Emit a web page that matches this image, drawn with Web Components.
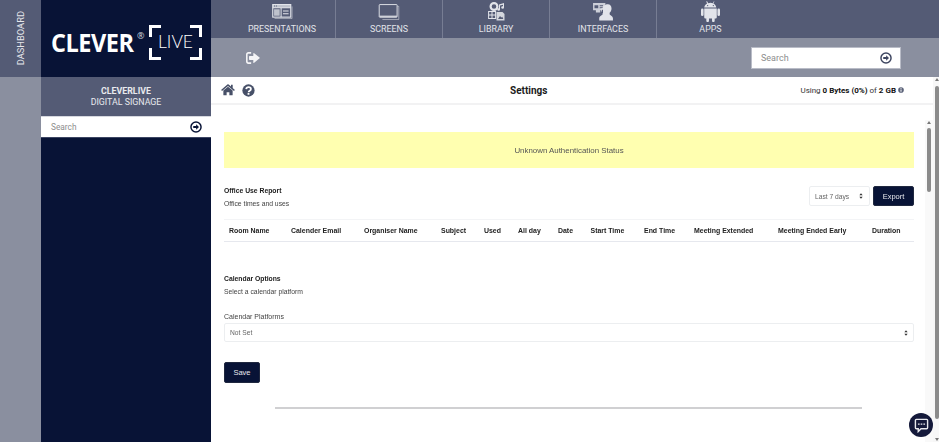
<!DOCTYPE html>
<html lang="en">
<head>
<meta charset="utf-8">
<title>CleverLive Settings</title>
<style>
html, body { margin: 0; height: 100%; overflow: hidden; background: #fff; }
body { font-family: "Liberation Sans", Arial, sans-serif; }
</style>
</head>
<body>
<cl-shell>
    <cl-rail slot="rail">DASHBOARD</cl-rail>
    <cl-logo slot="logo"></cl-logo>
    <cl-sidebar slot="sidebar" title-line="CLEVERLIVE" sub-line="DIGITAL SIGNAGE"></cl-sidebar>
    <cl-nav-item slot="nav" icon="presentations">PRESENTATIONS</cl-nav-item>
    <cl-nav-item slot="nav" icon="screens">SCREENS</cl-nav-item>
    <cl-nav-item slot="nav" icon="library">LIBRARY</cl-nav-item>
    <cl-nav-item slot="nav" icon="interfaces">INTERFACES</cl-nav-item>
    <cl-nav-item slot="nav" icon="apps" last>APPS</cl-nav-item>
    <cl-subbar slot="subbar"></cl-subbar>
    <cl-settings slot="main"></cl-settings>
</cl-shell>
<cl-scrollbar class="outer"></cl-scrollbar>
<cl-chat></cl-chat>

<script>
const ICONS = {
    home: `<svg viewBox="0 0 16 14" width="100%" height="100%"><path fill="currentColor" d="M8 3.2 2.6 7.7v5c0 .3.2.5.5.5h3.3V9.6h3.2v3.6h3.3c.3 0 .5-.2.5-.5v-5zM15.8 6.6l-2.3-1.9V1h-2v2L8.7.5C8.3.2 7.7.2 7.3.5L.2 6.6c-.2.1-.2.4 0 .6l.6.7c.2.2.4.2.6 0L8 2.4l6.6 5.5c.2.2.4.2.6 0l.6-.7c.2-.2.2-.5 0-.6z"/></svg>`,
    question: `<svg viewBox="0 0 14 14" width="100%" height="100%"><circle cx="7" cy="7" r="6.6" fill="currentColor"/><path fill="none" stroke="#fff" stroke-width="1.9" d="M4.5 5.4C4.7 4 5.8 3.3 7.1 3.3c1.4 0 2.5.8 2.5 2 0 1-.6 1.5-1.3 1.9-.8.5-1.2.8-1.2 1.7"/><rect x="6" y="9.7" width="2" height="1.9" fill="#fff"/></svg>`,
    info: `<svg viewBox="0 0 14 14" width="100%" height="100%"><circle cx="7" cy="7" r="6.6" fill="currentColor"/><rect x="5.8" y="2.8" width="2.4" height="2.2" fill="#fff"/><rect x="5.8" y="6" width="2.4" height="5" fill="#fff"/></svg>`,
    signout: `<svg viewBox="0 0 14 12" width="100%" height="100%"><path fill="currentColor" d="M4.8 0H2.4C1 0 0 1 0 2.4v7.2C0 11 1 12 2.4 12h2.4c.3 0 .4-.2.4-.4v-.9c0-.3-.1-.4-.4-.4H2.6c-.6 0-1-.5-1-1V2.7c0-.6.4-1 1-1h2.2c.3 0 .4-.2.4-.4V.4c0-.2-.1-.4-.4-.4z"/><path fill="currentColor" d="M8.2 1.2c-.3-.3-.9-.1-.9.4v2.5H3.6c-.4 0-.6.3-.6.6v2.6c0 .3.2.6.6.6h3.7v2.5c0 .5.6.7.9.4L13.6 6.3c.2-.2.2-.5 0-.7z"/></svg>`,
    go: `<svg viewBox="0 0 14 14" width="100%" height="100%"><circle cx="7" cy="7" r="5.9" fill="none" stroke="currentColor" stroke-width="1.7"/><path fill="currentColor" d="M7.2 3.7 10.5 7l-3.3 3.3V8.2H3.8V5.8h3.4z"/></svg>`,
    presentations: `<svg viewBox="0 0 22 16" width="100%" height="100%"><g fill="none" stroke="currentColor"><path stroke-opacity=".55" d="M2.5 15.4h18.7V2.6"/><rect x=".6" y=".6" width="19.2" height="13.4" stroke-width="1.2"/><path d="M.6 4h19.2M9.5 4v10M11.5 7.5h6M11.5 10.5h6" stroke-width="1.1"/></g><path fill="currentColor" d="M.6.6h19.2V4H.6zM2 5.5h6v7H2z" opacity=".75"/><path fill="#545b75" d="M2 1.7h1v1H2zM4 1.7h1v1H4z"/></svg>`,
    screens: `<svg viewBox="0 0 22 17" width="100%" height="100%"><g fill="none" stroke="currentColor"><path stroke-opacity=".55" d="M20 2.500h1.400v14H4"/><rect x=".6" y=".6" width="19" height="13.400" rx=".6" stroke-width="1"/></g><path fill="currentColor" d="M1 12.300h18.400V14H1z" opacity=".8"/></svg>`,
    library: `<svg viewBox="0 0 17 19" width="100%" height="100%"><circle cx="6" cy="4.500" r="3.400" fill="none" stroke="currentColor" stroke-width="2.200"/><path fill="currentColor" d="M11 2.500 16 1v4.400a1.400 1.200 0 1 1-1-1.100V2.700l-3 .9v3.800a1.400 1.200 0 1 1-1-1.100z"/><g fill="none" stroke="currentColor"><rect x=".6" y="9.500" width="7" height="7" /><path d="M4 9.500v7M.6 13h7"/></g><path fill="currentColor" d="M8.500 10h6l2 2v6.500h-8z" opacity=".9"/><path fill="#545b75" d="m10 17 2-3 1.400 1.600.9-.9 1 2.300z"/></svg>`,
    interfaces: `<svg viewBox="0 0 21 19" width="100%" height="100%"><path fill="currentColor" d="M0 0h13v2.600a4.600 4.600 0 0 0-1.200 3c0 .7.1 1.300.4 2H7.600V10H3V7.600H0z" opacity=".85"/><path fill="#545b75" d="M1.500 2.500h4v3h-4zM7 2.500h3.500v1H7zM7 4.500h3.500v1H7z"/><path fill="currentColor" d="M15.600 1.400c2.500 0 3.900 1.900 3.900 4.300 0 2-.8 3.700-2 4.700v1.500c0 1 3.500 1.800 3.500 4.200V18.500H6.500v-2.400c0-2.400 3.600-3.200 3.600-4.200v-1.500c-1.200-1-2-2.700-2-4.700H10c.2-2.500 3-4.300 5.600-4.300z"/><path fill="#545b75" d="M9.200 7h1.300v3.600H9.200z"/></svg>`,
    apps: `<svg viewBox="0 0 20 22" width="100%" height="100%"><path fill="currentColor" d="M6.400.2l1.200 2a6.800 6.800 0 0 1 4.800 0l1.200-2 .5.300-1.100 2c1.800 1 3 2.600 3.100 4.400H3.400c.1-1.800 1.300-3.400 3.100-4.400l-1.100-2z"/><path fill="currentColor" d="M3.400 7.800h13.200v9.300c0 .8-.6 1.400-1.400 1.400h-.8v2.300a1.400 1.400 0 0 1-2.800 0v-2.300H8.400v2.300a1.400 1.400 0 0 1-2.800 0v-2.300h-.8c-.8 0-1.400-.6-1.400-1.400z"/><rect x="0" y="7.800" width="2.700" height="8" rx="1.350" fill="currentColor"/><rect x="17.300" y="7.800" width="2.700" height="8" rx="1.350" fill="currentColor"/><circle cx="7" cy="4.800" r=".7" fill="#545b75"/><circle cx="13" cy="4.800" r=".7" fill="#545b75"/></svg>`,
    sort: `<svg viewBox="0 0 6 9" width="100%" height="100%"><path fill="currentColor" d="M3 .5 5.500 3.500H.5zM3 8.500.5 5.500h5z"/></svg>`,
    chat: `<svg viewBox="0 0 16 16" width="100%" height="100%"><path fill="none" stroke="currentColor" stroke-width="1.500" d="M2.500 1.500h11c.6 0 1 .4 1 1v8c0 .6-.4 1-1 1H7.500L4.500 14.500v-3h-2c-.6 0-1-.4-1-1v-8c0-.6.4-1 1-1z"/><path fill="currentColor" d="M4.200 5.800h1.800v1.400H4.200zM7.100 5.800h1.800v1.400H7.100zM10 5.800h1.800v1.400H10z"/></svg>`,
};

class ClIcon extends HTMLElement {
    connectedCallback() {
        const w = this.getAttribute("w") || 14;
        const h = this.getAttribute("h") || w;
        this.attachShadow({mode: "open"}).innerHTML = `
<style>
:host { display: inline-block; flex: none; width: ${w}px; height: ${h}px; line-height: 0; }
</style>
${ICONS[this.getAttribute("name")] || ""}`;
    }
}
customElements.define("cl-icon", ClIcon);

customElements.define("cl-shell", class extends HTMLElement {
    constructor() {
        super();
        this.attachShadow({mode: "open"}).innerHTML = `
<style>
:host {
    display: grid;
    grid-template-columns: 41px 170px 1fr;
    grid-template-rows: 77px 1fr;
    width: 939px;
    height: 442px;
    overflow: hidden;
}
.left { grid-row: 1 / 3; display: flex; flex-direction: column; background: #8a8f9f; }
.brand { background: #081336; }
.side { background: #081336; }
.top { display: flex; flex-direction: column; }
.nav { display: flex; height: 38px; padding-left: 18px; background: #545b75; }
.main { min-width: 0; }
</style>
<div class="left"><slot name="rail"></slot></div>
<div class="brand"><slot name="logo"></slot></div>
<div class="top">
    <div class="nav"><slot name="nav"></slot></div>
    <slot name="subbar"></slot>
</div>
<div class="side"><slot name="sidebar"></slot></div>
<div class="main"><slot name="main"></slot></div>`;
    }
});

customElements.define("cl-rail", class extends HTMLElement {
    constructor() {
        super();
        this.attachShadow({mode: "open"}).innerHTML = `
<style>
:host {
    display: flex;
    align-items: center;
    justify-content: center;
    height: 77px;
    background: #545b75;
    color: #e6e7ec;
    font: 400 9.300px Roboto, sans-serif;
}
span { writing-mode: vertical-rl; transform: rotate(180deg); }
</style>
<span><slot></slot></span>`;
    }
});

customElements.define("cl-logo", class extends HTMLElement {
    constructor() {
        super();
        this.attachShadow({mode: "open"}).innerHTML = `
<style>
:host { display: flex; align-items: center; height: 77px; padding: 8px 0 0 10px; box-sizing: border-box; color: #fff; }
.clever { font: 700 25px/1 "Open Sans", sans-serif; letter-spacing: -.5px; transform: scaleX(.94); transform-origin: left; width: 86px; }
.reg { font: 400 9px/1 "Open Sans", sans-serif; align-self: flex-start; margin: 23px 0 0 0; width: 12px; color: #d5d7df; }
.live { position: relative; width: 53px; height: 35px; display: flex; align-items: center; justify-content: center; margin-top: -1px; }
.live svg { position: absolute; inset: 0; }
.live span { font: 300 17.500px/1 Lato, sans-serif; }
</style>
<span class="clever">CLEVER</span><span class="reg">®</span>
<div class="live">
    <svg viewBox="0 0 53 35" width="53" height="35" fill="none" stroke="#fff" stroke-width="3"><path d="M1.500 12V1.500H12M41 1.500H51.500V12M1.500 23V33.500H12M41 33.500H51.500V23"/></svg>
    <span>LIVE</span>
</div>`;
    }
});

customElements.define("cl-search", class extends HTMLElement {
    constructor() {
        super();
        this.attachShadow({mode: "open"}).innerHTML = `
<style>
:host {
    display: flex;
    align-items: center;
    justify-content: space-between;
    box-sizing: border-box;
    background: #fff;
    color: #8d8d8d;
    font: 400 8.300px Roboto, sans-serif;
}
cl-icon { color: var(--go-color, #081336); }
</style>
<span><slot></slot></span>
<cl-icon name="go" w="12"></cl-icon>`;
    }
});

customElements.define("cl-sidebar", class extends HTMLElement {
    constructor() {
        super();
        this.attachShadow({mode: "open"}).innerHTML = `
<style>
:host { display: block; height: 100%; }
.head {
    height: 39px;
    background: #545b75;
    color: #e9eaee;
    font: 400 8.800px/11px Roboto, sans-serif;
    display: flex;
    flex-direction: column;
    align-items: center;
    justify-content: center;
}
.head b { font-weight: 700; }
cl-search { height: 22px; padding: 0 9px 0 10px; border-top: 1px solid #d6d8df; border-bottom: 1px solid #3c4563; }
</style>
<div class="head">
    <b>${this.getAttribute("title-line")}</b>
    <span>${this.getAttribute("sub-line")}</span>
</div>
<cl-search>Search</cl-search>`;
    }
});

customElements.define("cl-nav-item", class extends HTMLElement {
    constructor() {
        super();
        this.attachShadow({mode: "open"}).innerHTML = `
<style>
:host {
    display: flex;
    flex-direction: column;
    align-items: center;
    box-sizing: border-box;
    width: 107px;
    height: 38px;
    color: #e2e4ea;
    font: 400 8.900px/11px Roboto, sans-serif;
    border-right: 1px solid #777d93;
}
:host([last]) { border-right: 0; }
.icon { height: 23px; display: flex; align-items: center; justify-content: center; }
.label { padding-top: 1px; }
</style>
<div class="icon"></div>
<div class="label"><slot></slot></div>`;
    }
    connectedCallback() {
        const sizes = {presentations: [21, 15], screens: [22, 16], library: [17, 19], interfaces: [20, 18], apps: [19, 21]};
        const name = this.getAttribute("icon");
        const [w, h] = sizes[name];
        const icon = document.createElement("cl-icon");
        icon.setAttribute("name", name);
        icon.setAttribute("w", w);
        icon.setAttribute("h", h);
        this.shadowRoot.querySelector(".icon").append(icon);
    }
});

customElements.define("cl-subbar", class extends HTMLElement {
    constructor() {
        super();
        this.attachShadow({mode: "open"}).innerHTML = `
<style>
:host {
    display: flex;
    align-items: center;
    justify-content: space-between;
    height: 39px;
    padding: 0 38px 0 35px;
    background: #8a8f9f;
}
cl-icon { color: #f4f4f6; }
cl-search { width: 150px; height: 22px; padding: 0 8px 0 9px; border: 1px solid #b9bcc7; font-size: 9px; --go-color: #3d4560; }
</style>
<cl-icon name="signout" w="14" h="12"></cl-icon>
<cl-search>Search</cl-search>`;
    }
});

customElements.define("cl-section-title", class extends HTMLElement {
    constructor() {
        super();
        this.attachShadow({mode: "open"}).innerHTML = `
<style>
:host { display: block; }
.t { font: 700 6.800px/13px "Liberation Sans", sans-serif; color: #1b1b1b; }
.s { font: 400 6.800px/13px "Liberation Sans", sans-serif; color: #444; }
</style>
<div class="t"><slot></slot></div>
<div class="s"><slot name="sub"></slot></div>`;
    }
});

customElements.define("cl-dropdown", class extends HTMLElement {
    constructor() {
        super();
        this.attachShadow({mode: "open"}).innerHTML = `
<style>
:host {
    display: flex;
    align-items: center;
    justify-content: space-between;
    box-sizing: border-box;
    padding: 0 6px 0 5px;
    border: 1px solid #eceef0;
    border-radius: 2px;
    color: #666;
    font: 400 6.700px "Liberation Sans", sans-serif;
    background: #fff;
}
cl-icon { color: #333; }
</style>
<span><slot></slot></span>
<cl-icon name="sort" w="4" h="6"></cl-icon>`;
    }
});

customElements.define("cl-button", class extends HTMLElement {
    constructor() {
        super();
        this.attachShadow({mode: "open"}).innerHTML = `
<style>
:host {
    display: inline-flex;
    align-items: center;
    justify-content: center;
    box-sizing: border-box;
    background: #081336;
    color: #e8e9ee;
    border-radius: 2px;
    border: 1px solid #20283f;
    font: 400 7.500px "Liberation Sans", sans-serif;
}
</style>
<slot></slot>`;
    }
});

customElements.define("cl-report-table", class extends HTMLElement {
    constructor() {
        super();
        const cols = ["Room Name", "Calender Email", "Organiser Name", "Subject", "Used", "All day", "Date", "Start Time", "End Time", "Meeting Extended", "Meeting Ended Early", "Duration"];
        this.attachShadow({mode: "open"}).innerHTML = `
<style>
:host {
    display: grid;
    grid-template-columns: 62px 73px 77px 43px 34px 40px 32.500px 53.500px 50px 84px 94px 1fr;
    align-items: center;
    box-sizing: border-box;
    height: 23px;
    padding-left: 5px;
    border-top: 1px solid #f3f4f6;
    border-bottom: 1px solid #e6e8ee;
    font: 700 6.950px "Liberation Sans", sans-serif;
    color: #222;
}
</style>
${cols.map(c => `<span>${c}</span>`).join("")}`;
    }
});

customElements.define("cl-settings", class extends HTMLElement {
    constructor() {
        super();
        this.attachShadow({mode: "open"}).innerHTML = `
<style>
:host { display: block; height: 100%; background: #fff; position: relative; }
.bar {
    display: grid;
    grid-template-columns: 289px auto 1fr;
    align-items: center;
    height: 26px;
    margin-right: 6px;
    padding: 0 29px 0 10px;
    border-bottom: 2px solid #f2f2f3;
    opacity: .999;
}
.icons { display: flex; align-items: center; gap: 7px; color: #475068; }
.title { font: 700 10px Roboto, sans-serif; color: #1c1c1c; }
.usage { justify-self: end; display: flex; align-items: center; gap: 2px; font: 400 8px Roboto, sans-serif; color: #333; }
.usage b { color: #111; }
.usage cl-icon { color: #5a6178; }
.body { padding: 27px 25px 0 13px; opacity: .999; }
.alert {
    display: flex;
    align-items: center;
    justify-content: center;
    height: 36px;
    background: #ffffb0;
    color: #555;
    font: 400 7.900px "Liberation Sans", sans-serif;
}
.report-head { display: flex; justify-content: space-between; margin-top: 16px; height: 35px; }
.actions { display: flex; gap: 3px; height: 20px; margin-top: 2px; }
.actions cl-dropdown { width: 61px; }
.actions cl-button { width: 41px; }
.calendar { margin-top: 29.500px; }
.field-label { font: 400 7px/10px "Liberation Sans", sans-serif; color: #444; margin-top: 14.500px; height: 11px; }
.platform { height: 19px; padding-right: 5px; }
.save { width: 36px; height: 21px; margin-top: 20px; }
hr { border: 0; height: 2px; background: #d0d0d2; margin: 24px 52px 0 51px; }
</style>
<div class="bar">
    <div class="icons"><cl-icon name="home" w="14" h="12"></cl-icon><cl-icon name="question" w="13"></cl-icon></div>
    <div class="title">Settings</div>
    <div class="usage"><span>Using <b>0 Bytes (0%)</b> of <b>2 GB</b></span><cl-icon name="info" w="6"></cl-icon></div>
</div>
<div class="body">
    <div class="alert">Unknown Authentication Status</div>
    <div class="report-head">
        <cl-section-title>Office Use Report<span slot="sub">Office times and uses</span></cl-section-title>
        <div class="actions"><cl-dropdown>Last 7 days</cl-dropdown><cl-button>Export</cl-button></div>
    </div>
    <cl-report-table></cl-report-table>
    <cl-section-title class="calendar">Calendar Options<span slot="sub">Select a calendar platform</span></cl-section-title>
    <div class="field-label">Calendar Platforms</div>
    <cl-dropdown class="platform">Not Set</cl-dropdown>
    <cl-button class="save">Save</cl-button>
    <hr>
</div>
<cl-scrollbar class="inner"></cl-scrollbar>`;
    }
});

// both scrollbars sit over the content, so they are absolute
customElements.define("cl-scrollbar", class extends HTMLElement {
    constructor() {
        super();
        this.attachShadow({mode: "open"}).innerHTML = `
<style>
:host { display: block; position: absolute; width: 8px; background: #f7f7f7; }
:host(.outer) { left: 933px; top: 77px; width: 6px; height: 365px; --thumb-top: 9px; --thumb-h: 333px; }
:host(.inner) { right: 6px; top: 43px; height: 350px; background: #f9f9f9; --thumb-top: 8px; --thumb-h: 64px; }
.up { position: absolute; left: 1.500px; top: 1px; border: 2.500px solid transparent; border-top: 0; border-bottom: 3px solid #777; }
.down { position: absolute; left: 1.500px; bottom: 1px; border: 2.500px solid transparent; border-bottom: 0; border-top: 3px solid #777; }
.thumb { position: absolute; left: 2px; width: 4px; top: var(--thumb-top); height: var(--thumb-h); background: #8b8b8b; border-radius: 2px; }
</style>
<div class="up"></div><div class="thumb"></div><div class="down"></div>`;
    }
});

customElements.define("cl-chat", class extends HTMLElement {
    constructor() {
        super();
        this.attachShadow({mode: "open"}).innerHTML = `
<style>
:host {
    position: fixed;
    left: 909px;
    top: 413px;
    width: 24px;
    height: 24px;
    border-radius: 50%;
    background: #14193a;
    color: #e8e9ee;
    display: flex;
    align-items: center;
    justify-content: center;
}
</style>
<cl-icon name="chat" w="15"></cl-icon>`;
    }
});
</script>
</body>
</html>
